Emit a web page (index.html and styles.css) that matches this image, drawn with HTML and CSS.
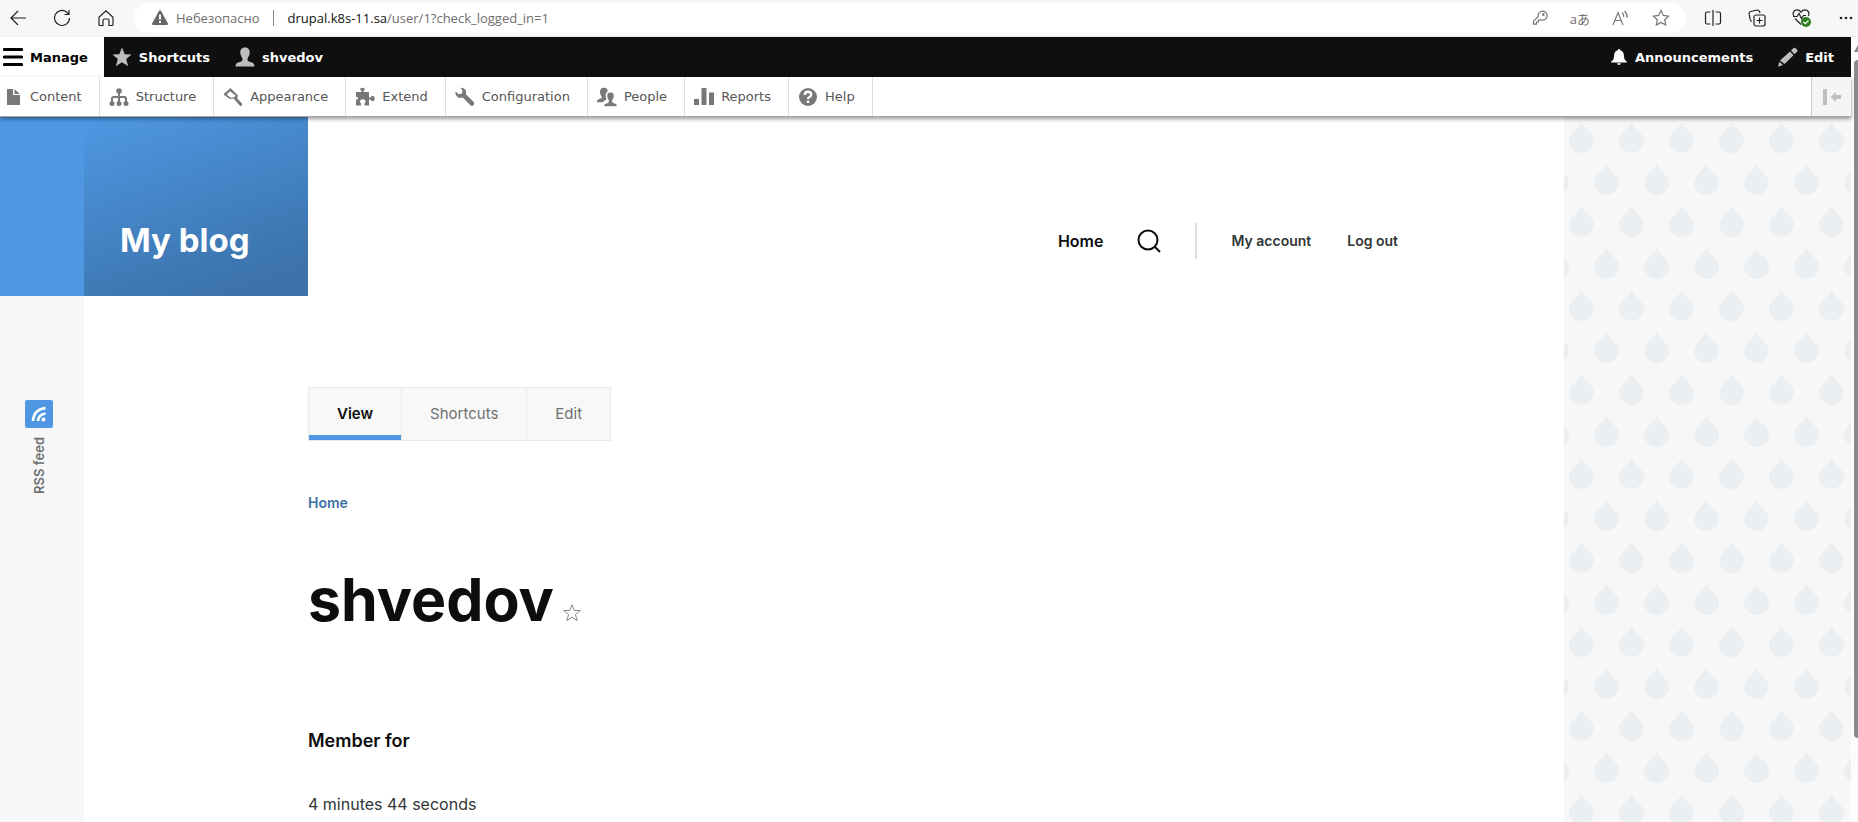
FILE: index.html
```html
<!DOCTYPE html>
<html lang="en">
<head>
<meta charset="utf-8">
<title>shvedov | My blog</title>
<link rel="stylesheet" href="styles.css">
</head>
<body>
<header class="browser">
  <div class="browser-nav">
    <button class="chrome-btn" aria-label="Back"><svg width="18" height="18" viewBox="0 0 18 18"><path d="M17 9H2M9 2L2 9l7 7"/></svg></button>
    <button class="chrome-btn" aria-label="Refresh"><svg width="18" height="18" viewBox="0 0 18 18"><path d="M16.5 9A7.5 7.5 0 1 1 13.800 3.200L16 5.500M16 1v4.500h-4.500"/></svg></button>
    <button class="chrome-btn" aria-label="Home page"><svg width="18" height="18" viewBox="0 0 18 18"><path d="M2 8.200L9 1.800l7 6.400V15.500q0 1-1 1h-3V11.500q0-1.500-1.500-1.500h-3Q6 10 6 11.500v5H3q-1 0-1-1z"/></svg></button>
  </div>
  <div class="omnibox">
    <svg width="18" height="16" viewBox="0 0 18 16"><path class="warn" d="M7.800 1.200q1.200-1.800 2.400 0l6.600 12q.8 1.800-1.200 1.800H2.400q-2 0-1.200-1.800z"/><path class="warn-mark" d="M9 4.500v5M9 11v2"/></svg>
    <span class="insecure">Небезопасно</span>
    <span class="url-divider"></span>
    <span class="url"><b>drupal.k8s-11.sa</b>/user/1?check_logged_in=1</span>
    <div class="omnibox-actions">
      <button class="chrome-btn" aria-label="Password"><svg width="16" height="16" viewBox="0 0 16 16"><path d="M8.800 9.800l-2.300.2v2H4.500v2.200H1.500v-3L6.200 6.500A4.500 4.500 0 1 1 8.800 9.800z"/><circle cx="11.300" cy="4.600" r=".7"/></svg></button>
      <button class="chrome-btn translate" aria-label="Translate">aあ</button>
      <button class="chrome-btn" aria-label="Read aloud"><svg width="18" height="16" viewBox="0 0 18 16"><path d="M1 15L6 2.500 11 15M2.800 10.500h6.400M10 2.500q2 2 1.800 4.500M12.500 1q3 2.800 2.600 6.800"/></svg></button>
      <button class="chrome-btn" aria-label="Favorite"><svg width="18" height="18" viewBox="0 0 18 18"><path d="M9 1.500l2.300 4.900 5.300.7-3.900 3.700 1 5.300L9 13.500l-4.700 2.600 1-5.300L1.400 7.100l5.300-.7z"/></svg></button>
    </div>
  </div>
  <div class="browser-tools">
    <button class="chrome-btn" aria-label="Split screen"><svg width="18" height="18" viewBox="0 0 18 18"><path d="M6.500 3H3Q1.500 3 1.500 4.500v9Q1.500 15 3 15h3.500M9 1v16M11.500 3H15q1.500 0 1.500 1.500v9Q16.500 15 15 15h-3.500"/></svg></button>
    <button class="chrome-btn" aria-label="Collections"><svg width="18" height="18" viewBox="0 0 18 18"><rect x="6" y="6" width="11" height="11" rx="2"/><path d="M11.500 8.500v6M8.500 11.500h6M4 12.500Q2.500 12 2.200 10.500L1 4.500Q1 3 2.500 2.500l7-1.500q1.500 0 2 1.500l.5 1.500"/></svg></button>
    <button class="chrome-btn" aria-label="Browser essentials"><svg width="20" height="20" viewBox="0 0 20 20"><path d="M2 8Q0 5 2.500 2.700 6 .5 9 4q3-3.500 6.500-1.300Q18 5 16.200 8M1 8.500h4l2-3 2.500 5 2-3H14M3 10.500l6 6"/><circle class="ok" cx="14" cy="14" r="5"/><path class="ok-mark" d="M11.500 14l1.800 1.700 3.200-3.200"/></svg></button>
    <button class="chrome-btn" aria-label="Settings"><svg width="16" height="6" viewBox="0 0 16 6"><g class="dots"><circle cx="3" cy="3" r="1.300"/><circle cx="8" cy="3" r="1.300"/><circle cx="13" cy="3" r="1.300"/></g></svg></button>
  </div>
</header>

<div class="viewport">
  <div class="document">
    <nav class="admin-bar" aria-label="Administration">
      <a class="admin-link active" href="#"><svg width="20" height="20" viewBox="0 0 20 20"><path d="M1.500 2.500h17M1.500 10h17M1.500 17.500h17" stroke="#000" stroke-width="3.200" stroke-linecap="round"/></svg>Manage</a>
      <a class="admin-link" href="#"><svg width="20" height="20" viewBox="0 0 20 20"><path d="M10 .5l2.700 6.700 6.800.4-5.300 4.500 1.900 7.200L10 15.300l-6.100 4 1.900-7.200L.5 7.600l6.800-.4z"/></svg>Shortcuts</a>
      <a class="admin-link" href="#"><svg width="20" height="20" viewBox="0 0 20 20"><path d="M10 .5c3.500 0 5 2.500 4.700 5.500-.2 2.500-1.700 4-2.200 6-.2 2 1 2.500 3.500 3.200 2.500.7 3.500 1.800 3.500 4.300H.5C.5 17 1.500 15.900 4 15.200c2.500-.7 3.700-1.200 3.500-3.200C7 10 5.500 8.500 5.300 6 5 3 6.500.5 10 .5z"/></svg>shvedov</a>
      <span class="spacer"></span>
      <a class="admin-link" href="#"><svg width="18" height="18" viewBox="0 0 18 18"><path fill="#fff" d="M9 1q1.200 0 1.200 1.200C13 3 13.800 5 14 8c.2 3.500 1 4.500 2.800 5.500v1H1.200v-1C3 12.500 3.800 11.500 4 8c.2-3 1-5 3.800-5.800Q7.800 1 9 1zM7 15.300h4Q10.500 17 9 17t-2-1.700z"/></svg>Announcements</a>
      <a class="admin-link" href="#"><svg width="20" height="20" viewBox="0 0 20 20"><path d="M13 3.500L16 .8q.7-.4 1.300.2l2.200 2.300q.4.600-.2 1.200l-2.800 2.700zM12 4.500l3.500 3.700-9 8.800L2 13.500zM1.300 14.700L5 18l-4 1.500q-1 0-.7-1z"/></svg>Edit</a>
    </nav>
    <nav class="tray" aria-label="Manage">
      <a class="tray-link" href="#"><svg width="20" height="20" viewBox="0 0 20 20"><path d="M4 2h6v6h7v10H4zM11.500 2L17 7h-5.500z"/></svg>Content</a>
      <a class="tray-link" href="#"><svg width="20" height="20" viewBox="0 0 20 20"><circle cx="10" cy="4" r="2.800"/><path d="M9 5h2v4h4.500Q18 9 18 11.500V15h-2v-3q0-1-1-1h-4v4H9v-4H5q-1 0-1 1v3H2v-3.500Q2 9 4.500 9H9z"/><circle cx="3" cy="16.500" r="2.500"/><circle cx="10" cy="16.500" r="2.500"/><circle cx="17" cy="16.500" r="2.500"/></svg>Structure</a>
      <a class="tray-link" href="#"><svg width="20" height="20" viewBox="0 0 20 20"><path fill-rule="evenodd" d="M7.500 1L15 8.500 13.500 13q-.5.500-1 0l-1.500-1.500-4 .5L1 8q-.6-1 .2-1.600zM7 4.200L3.800 7.500l3.700 3.300 3.500-.5 1.800-1.500z"/><path d="M11 12l2.200-1.700 5.800 6.200q.6 1-.3 2t-2 0z"/></svg>Appearance</a>
      <a class="tray-link" href="#"><svg width="20" height="20" viewBox="0 0 20 20"><path d="M1 5h5.500V3.800Q5 3 5.200 2 5.500.8 7.500.8T9.800 2Q10 3 8.500 3.800V5H14v5.500h1.500q.8-1.700 2.200-1.700 2 0 2 2.700t-2 2.700q-1.400 0-2.200-1.700H14V18.500H9.500v-2q1-.8 1-2 0-2.300-2.700-2.300T5 14.500q0 1.200 1 2v2H1v-6h1.700v-2.500H1z"/></svg>Extend</a>
      <a class="tray-link" href="#"><svg width="20" height="20" viewBox="0 0 20 20"><path d="M5.500.8Q10 .5 11 4.500q.3 1.500-.2 2.800l8 7.700q1 1.300-.2 3-1.500 1.500-3 .4L7.800 10.600Q3.500 12 1.200 8.500.2 6.800.5 4.500l3.300 2.700L7 6.500l.5-3z"/></svg>Configuration</a>
      <a class="tray-link" href="#"><svg width="20" height="20" viewBox="0 0 20 20"><path d="M7 .8c3 0 3.800 1.700 3.600 3.800C9 5.800 8.300 7.800 8.800 10.200q.3 1.300 1 2.200-2.800.8-3.700 2.800H0c0-2 .5-2.800 2.500-3.300 2-.5 2.500-1 2.200-2.400C3.500 8 3 6.500 3 5 3 2.500 4 .8 7 .8z"/><path d="M13.500 5.200c3 0 3.700 2 3.500 4.300-.2 2-1.500 3-1.700 4.500 0 1.400.8 1.800 2.500 2.300 1.700.5 2.200 1.300 2.200 3.200H7c0-2 .5-2.700 2.300-3.200 1.700-.5 2.500-.9 2.400-2.300-.2-1.500-1.500-2.500-1.700-4.500-.2-2.300.5-4.300 3.500-4.300z" stroke="#fff" stroke-width=".6"/></svg>People</a>
      <a class="tray-link" href="#"><svg width="20" height="20" viewBox="0 0 20 20"><path d="M0 12h5v6H0zM7.500 1h5v17h-5zM15 5.500h5V18h-5z"/></svg>Reports</a>
      <a class="tray-link" href="#"><svg width="20" height="20" viewBox="0 0 20 20"><circle cx="10" cy="10" r="9"/><path d="M6.800 8Q6.800 4.800 10 4.800t3.200 2.700q0 1.500-1.500 2.300Q10 10.600 10 12M10 13.500v2.500" fill="none" stroke="#fff" stroke-width="2.400"/></svg>Help</a>
      <span class="spacer"></span>
      <button class="orient" aria-label="Vertical orientation"><svg width="20" height="16" viewBox="0 0 20 16"><path d="M1 0h4v16H1zM8.500 8L14 3v3h5v4h-5v3z"/></svg></button>
    </nav>

    <div class="page">
      <aside class="rail">
        <div class="rail-top"></div>
        <a class="rss" href="#"><svg width="28" height="28" viewBox="0 0 28 28"><rect width="28" height="28" rx="2" fill="#5097e3"/><path d="M8 21Q8.500 9.500 20.500 8M13 21q.5-6.500 7.500-7.500" fill="none" stroke="#fff" stroke-width="2.600"/><circle cx="18.500" cy="19.500" r="2" fill="#fff"/></svg><span class="rss-label">RSS feed</span></a>
      </aside>
      <div class="main">
        <header class="site-header">
          <a class="brand" href="#">My blog</a>
          <nav class="site-nav">
            <a class="nav-home" href="#">Home</a>
            <button class="search" aria-label="Search"><svg width="24" height="24" viewBox="0 0 24 24"><circle cx="11" cy="11" r="9.500"/><path d="M17.500 17.500l5.500 5.500"/></svg></button>
            <a class="nav-user first" href="#">My account</a>
            <a class="nav-user" href="#">Log out</a>
          </nav>
        </header>
        <main class="content">
          <nav class="tabs"><a class="tab current" href="#">View</a><a class="tab" href="#">Shortcuts</a><a class="tab" href="#">Edit</a></nav>
          <a class="crumb" href="#">Home</a>
          <div class="title-row">
            <h1 class="title">shvedov</h1>
            <button class="shortcut-star" aria-label="Add to shortcuts"><svg width="18" height="18" viewBox="0 0 18 18"><path d="M9 .8l2.100 5.600 6.200.2-4.900 3.800 1.800 6.300L9 13.200l-5.200 3.500 1.800-6.300L.7 6.600l6.200-.2z"/></svg></button>
          </div>
          <h2 class="field-label">Member for</h2>
          <p class="field-value">4 minutes 44 seconds</p>
        </main>
      </div>
      <svg class="drops" aria-hidden="true">
        <defs><pattern id="drop-pattern" width="50" height="84" patternUnits="userSpaceOnUse">
          <path id="drop" fill="#ebeff2" d="M17.500 4.500Q18.500 8 23 12q7 6.500 7 11.500a12.500 12.500 0 0 1-25 0Q5 18.500 12 12q4.500-4 5.500-7.500z"/>
          <use href="#drop" x="25" y="42"/><use href="#drop" x="-25" y="42"/>
        </pattern></defs>
        <rect width="100%" height="100%" fill="url(#drop-pattern)"/>
      </svg>
    </div>
  </div>
  <div class="scrollbar"><span class="scroll-up"></span><span class="thumb"></span></div>
</div>
</body>
</html>
```
FILE: styles.css
```css
* { box-sizing: border-box; }
body {
  margin: 0;
  height: 100vh;
  display: flex;
  flex-direction: column;
  overflow: hidden;
  background: #fff;
  color: #313637;
  font-family: Inter, "Open Sans", sans-serif;
}
a { color: inherit; text-decoration: none; }
button { border: 0; padding: 0; background: none; color: inherit; font: inherit; }
svg { display: block; flex: none; }

/* Browser chrome */
.browser {
  display: flex;
  align-items: center;
  height: 37px;
  flex: none;
  background: #f7f7f7;
  border-bottom: 1px solid #eee;
  font-family: "Open Sans", "Noto Sans CJK JP", sans-serif;
  font-size: 13px;
}
.browser-nav { display: flex; gap: 26px; padding: 0 19px 0 9px; }
.chrome-btn svg { fill: none; stroke: #222; stroke-width: 1.2; }
.omnibox {
  flex: 1;
  display: flex;
  align-items: center;
  height: 30px;
  padding: 0 16px 0 17px;
  border-radius: 15px;
  background: #fff;
  color: #6e6e6e;
}
.omnibox .warn { fill: #666; }
.omnibox .warn-mark { stroke: #fff; stroke-width: 2; }
.insecure { margin-left: 7px; }
.url-divider { width: 1px; height: 16px; margin: 0 14px 0 13px; background: #888; }
.url b { color: #111; font-weight: 400; }
.omnibox-actions { display: flex; align-items: center; gap: 22px; margin-left: auto; }
.omnibox-actions .chrome-btn svg { stroke: #777; }
.translate { font-size: 13px; }
.browser-tools { display: flex; align-items: center; gap: 26px; padding: 0 4px 0 18px; }
.chrome-btn .ok { fill: #2f7d1c; stroke: none; }
.chrome-btn .ok-mark { stroke: #fff; }
.dots { fill: #222; stroke: none; }

/* Viewport and scrollbar */
.viewport { flex: 1; min-height: 0; display: flex; }
.document { flex: 1; min-width: 0; display: flex; flex-direction: column; }
.scrollbar {
  width: 7px;
  padding: 8px 0 84px 3px;
  display: flex;
  flex-direction: column;
  gap: 8px;
  background: #fcfcfc;
  overflow: hidden;
}
.scroll-up { width: 8px; height: 7px; background: #888; clip-path: polygon(50% 0, 100% 100%, 0 100%); flex: none; }
.thumb { flex: 1; background: #8a8a8a; border-radius: 4px 0 0 4px; }

/* Administration toolbar */
.admin-bar, .tray { display: flex; flex: none; font-family: "DejaVu Sans", sans-serif; font-size: 13px; }
.admin-bar { height: 40px; background: #0f0f0f; color: #fff; font-weight: 700; }
.admin-link { display: flex; align-items: center; gap: 7px; padding: 0 17px 0 8px; }
.admin-link svg { fill: #bebebe; }
.admin-link.active { padding: 0 16px 0 3px; background: #fff; color: #000; }
.spacer { flex: 1; }
.tray {
  position: relative;
  height: 40px;
  background: #fff;
  color: #565656;
  border-bottom: 1px solid #a6a6a6;
  box-shadow: 0 2px 4px rgba(0, 0, 0, .4);
}
.tray-link { display: flex; align-items: center; gap: 7px; padding: 0 17px 0 9px; border-right: 1px solid #ddd; }
.tray-link:first-child { padding-left: 3px; }
.tray-link svg { fill: #787878; }
.orient { width: 40px; padding-left: 10px; background: #f5f5f5; border-left: 1px solid #ccc; }
.orient svg { fill: #bebebe; }

/* Site */
.page { flex: 1; min-height: 0; display: flex; overflow: hidden; }
.rail { width: 84px; background: #f7f7f7; flex: none; }
.rail-top { height: 179px; background: #5097e3; }
.rss { display: flex; flex-direction: column; gap: 9px; padding: 104px 0 0 25px; color: #6e7172; }
.rss-label { writing-mode: vertical-rl; transform: rotate(180deg); width: 28px; line-height: 28px; font-size: 13px; font-weight: 600; }
.main { flex: 1; min-width: 0; }
.site-header { display: flex; justify-content: space-between; padding-right: 166px; }
.brand {
  width: 224px;
  height: 179px;
  padding: 103px 0 0 36px;
  background: linear-gradient(160deg, #4f98e4 0%, #3d76b0 78%, #3d70aa 100%);
  color: #fff;
  font-size: 33px;
  line-height: 40px;
  font-weight: 700;
}
.site-nav { display: flex; align-items: center; height: 36px; margin-top: 106px; line-height: 36px; }
.nav-home { color: #0d0d0d; font-size: 16px; font-weight: 600; }
.search { margin: 0 34px; }
.search svg { fill: none; stroke: #0d0d0d; stroke-width: 2; }
.nav-user { font-size: 14px; font-weight: 600; margin-left: 36px; }
.nav-user.first { margin-left: 0; padding-left: 34px; border-left: 2px solid #ddd; }
.content { padding: 91px 166px 0 224px; }
.tabs { display: flex; width: max-content; border: 1px solid #eaeaea; background: #f8f8f8; }
.tab { padding: 0 28px; height: 52px; line-height: 52px; color: #6e7172; font-size: 15px; border-right: 1px solid #eaeaea; }
.tab:last-child { border-right: 0; }
.tab.current { color: #0d0d0d; font-weight: 600; box-shadow: inset 0 -5px #5097e3; }
.crumb { display: block; margin-top: 52px; width: max-content; color: #3d70a4; font-size: 14px; line-height: 20px; font-weight: 600; }
.title-row { display: flex; align-items: flex-end; gap: 9px; margin-top: 51px; }
.title { margin: 0; color: #0d0d0d; font-size: 59px; line-height: 72px; font-weight: 700; }
.shortcut-star { margin-bottom: 14px; }
.shortcut-star svg { fill: #fff; stroke: #888; }
.field-label { margin: 91px 0 0; color: #0d0d0d; font-size: 18px; line-height: 28px; font-weight: 600; }
.field-value { margin: 35px 0 0; font-size: 16px; line-height: 28px; }
.drops { width: 287px; height: auto; align-self: stretch; background: #f7f7f7; }

@media (max-width: 1200px) {
  .drops { display: none; }
  .site-header, .content { padding-right: 32px; }
}
```
